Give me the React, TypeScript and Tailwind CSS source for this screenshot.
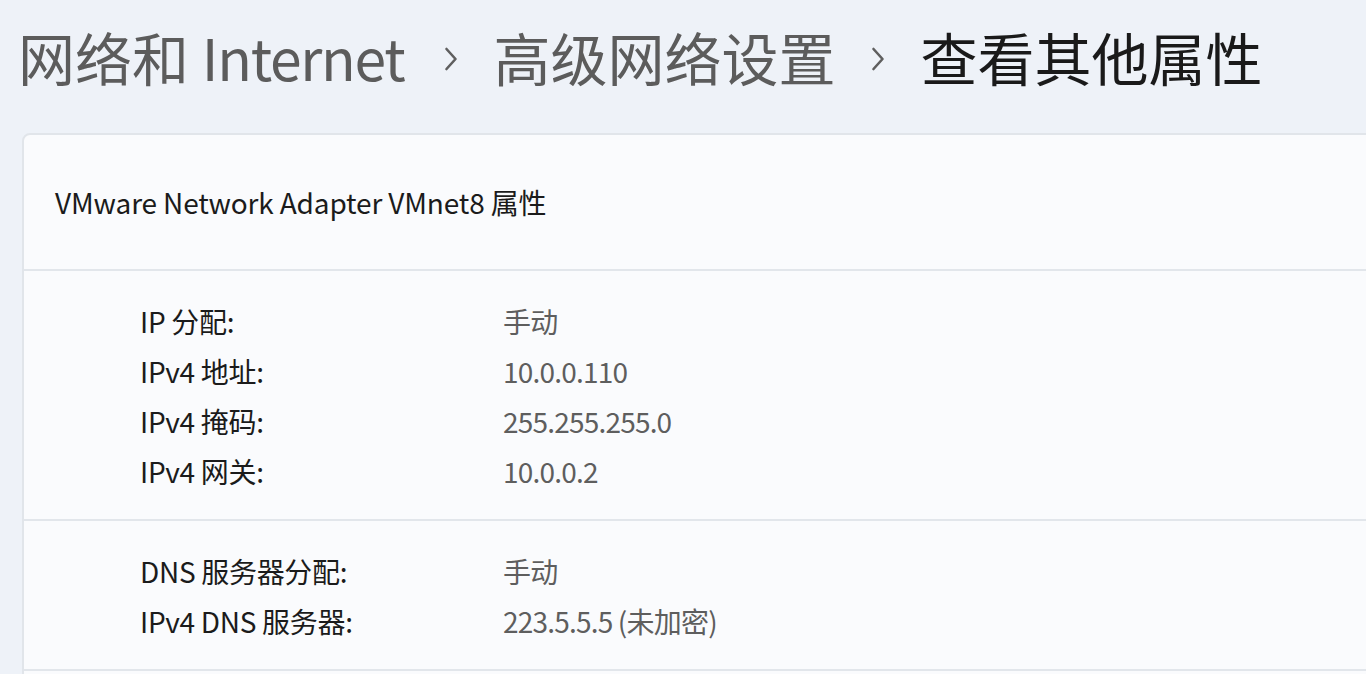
import React from "react";

const font = { fontFamily: '"Noto Sans CJK SC", "Noto Sans", sans-serif' };

function Chevron({ ml }: { ml: string }) {
  return (
    <svg width="14" height="24" viewBox="0 0 14 24" className={`${ml} mr-[35px] mt-[6px] shrink-0`}>
      <path d="M2.5 2 L11.5 12 L2.5 22" fill="none" stroke="#5f5f5f" strokeWidth="2.6" strokeLinecap="round" strokeLinejoin="round" />
    </svg>
  );
}

function Row({ label, value }: { label: string; value: string }) {
  return (
    <div className="flex h-[50px] items-center text-[28px]">
      <div className="w-[363px] shrink-0 tracking-[-0.3px] text-[#1b1b1b]">{label}</div>
      <div className="tracking-[-0.8px] text-[#5e5e5e]">{value}</div>
    </div>
  );
}

export default function App() {
  return (
    <div className="h-[674px] w-[1366px] overflow-hidden bg-[#eef2f8]" style={font}>
      <div className="flex h-[122px] items-center pl-[18px] pb-[10px] text-[57px] leading-none">
        <span className="text-[#5c5c5c]">
          网络和 <span className="tracking-[-1.3px]">Internet</span>
        </span>
        <Chevron ml="ml-[40px]" />
        <span className="text-[#5c5c5c]">高级网络设置</span>
        <Chevron ml="ml-[36px]" />
        <span className="text-[#1a1a1a]">查看其他属性</span>
      </div>
      <div className="ml-[22px] mt-[11px] w-[1400px] rounded-[8px] border-2 border-[#e1e5ea] bg-[#fafbfd]">
        <div className="flex h-[134px] items-center pl-[31px] text-[28px] tracking-[-0.15px] text-[#1b1b1b]">
          VMware Network Adapter VMnet8 属性
        </div>
        <div className="h-[2px] bg-[#e2e6eb]" />
        <div className="pl-[116px] pt-[25px] pb-[23px]">
          <Row label="IP 分配:" value="手动" />
          <Row label="IPv4 地址:" value="10.0.0.110" />
          <Row label="IPv4 掩码:" value="255.255.255.0" />
          <Row label="IPv4 网关:" value="10.0.0.2" />
        </div>
        <div className="h-[2px] bg-[#e2e6eb]" />
        <div className="pl-[116px] pt-[25px] pb-[23px]">
          <Row label="DNS 服务器分配:" value="手动" />
          <Row label="IPv4 DNS 服务器:" value="223.5.5.5 (未加密)" />
        </div>
        <div className="h-[2px] bg-[#e2e6eb]" />
        <div className="h-[40px]" />
      </div>
    </div>
  );
}
